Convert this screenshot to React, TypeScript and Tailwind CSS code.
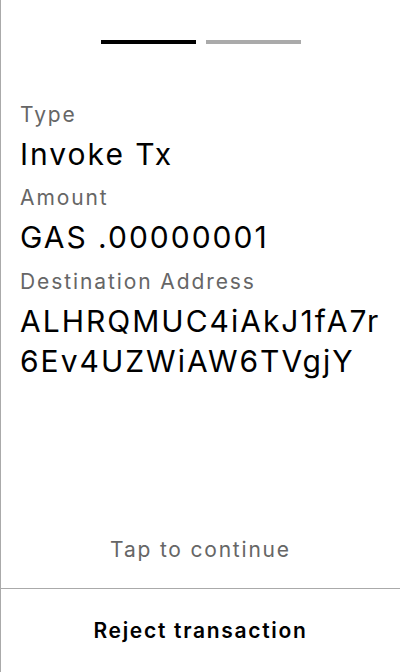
export default function App() {
  const font = { fontFamily: "Inter, 'Noto Sans', sans-serif" };
  return (
    <div style={font} className="w-[400px] h-[672px] bg-white border-l border-[#aaaaaa] flex flex-col text-black">
      <div className="flex justify-center gap-[10px] pt-[40px]">
        <div className="w-[95px] h-[4px] bg-black" />
        <div className="w-[95px] h-[4px] bg-[#aaaaaa]" />
      </div>
      <div className="flex-1 flex flex-col pl-[19px] pr-[12px] pt-[57px]">
        <div className="text-[21px] leading-[28px] tracking-[1.9px] text-[#666666] mb-[6px]">Type</div>
        <div className="text-[30px] leading-[39px] tracking-[2px] mb-[10px]">Invoke Tx</div>
        <div className="text-[21px] leading-[28px] tracking-[1.9px] text-[#666666] mb-[6px]">Amount</div>
        <div className="text-[30px] leading-[39px] tracking-[2px] mb-[11px]">GAS .00000001</div>
        <div className="text-[21px] leading-[28px] tracking-[1.9px] text-[#666666] mb-[5px]">Destination Address</div>
        <div className="text-[30px] leading-[40px] tracking-[2px] break-all">ALHRQMUC4iAkJ1fA7r6Ev4UZWiAW6TVgjY</div>
      </div>
      <div className="text-center text-[21px] leading-[28px] tracking-[1.8px] text-[#666666] pb-[24px]">Tap to continue</div>
      <div className="border-t border-[#aaaaaa] h-[84px] flex items-center justify-center pt-[1px]">
        <span className="text-[21px] leading-[28px] tracking-[1.7px] font-semibold">Reject transaction</span>
      </div>
    </div>
  );
}
